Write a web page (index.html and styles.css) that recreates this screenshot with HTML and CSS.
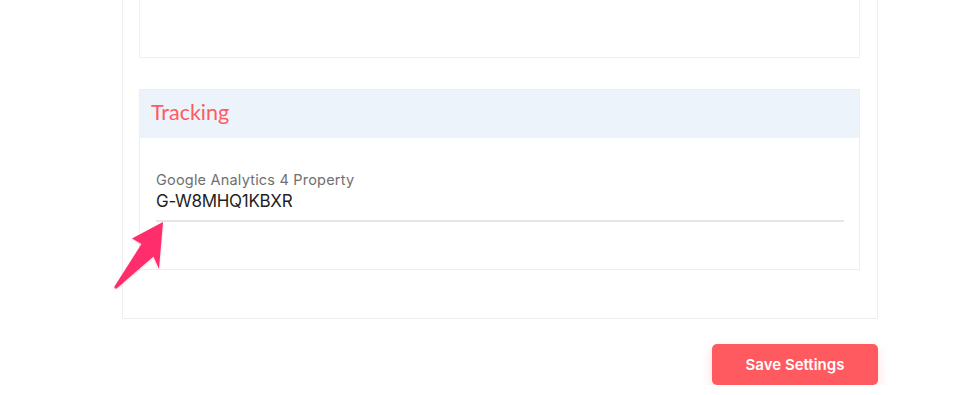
FILE: index.html
```html
<!DOCTYPE html>
<html lang="en">
<head>
<meta charset="utf-8">
<title>Settings</title>
<link rel="stylesheet" href="styles.css">
</head>
<body>
<div class="page">
  <section class="panel">
    <div class="card card-top"></div>
    <div class="card tracking">
      <div class="card-header"><h2 class="card-title">Tracking</h2></div>
      <div class="card-body">
        <label class="field">
          <span class="field-label">Google Analytics 4 Property</span>
          <span class="field-value">G-W8MHQ1KBXR</span>
        </label>
      </div>
      <svg class="arrow" width="60" height="80" viewBox="0 0 60 80" aria-hidden="true">
        <path d="M55 6 L24 22.5 L33.5 28 L6.5 70.5 Q6 73 8.5 72.5 L45.5 40.5 L51 53 Z" fill="#ff2d6b"/>
      </svg>
    </div>
  </section>
  <div class="actions">
    <button class="btn-save" type="button">Save Settings</button>
  </div>
</div>
</body>
</html>
```
FILE: styles.css
```css
* { box-sizing: border-box; }
html, body { margin: 0; padding: 0; background: #ffffff; }
body { font-family: Inter, "Noto Sans", "Liberation Sans", sans-serif; }

.page {
  width: 756px;
  margin-left: 122px;
}

.panel {
  border: 1px solid #eeeeee;
  border-top: none;
  padding: 0 17px 48px 16px;
  display: flex;
  flex-direction: column;
  gap: 31px;
}

.card {
  border: 1px solid #f0f0f0;
  background: #ffffff;
}

.card-top {
  height: 58px;
  border-top: none;
}

.tracking {
  position: relative;
  height: 181px;
  border-color: #eeeeee;
}

.card-header {
  height: 49px;
  margin: -1px -1px 0;
  background: #edf3fa;
  border: 1px solid #e8eff7;
  border-bottom: none;
  padding-left: 11px;
  padding-bottom: 4px;
  display: flex;
  align-items: center;
}

.card-title {
  margin: 0;
  font-family: Lato, "Open Sans", sans-serif;
  font-weight: 400;
  font-size: 21.5px;
  color: #ff5a5f;
}

.card-body {
  padding: 33px 15px 0 16px;
}

.field {
  display: flex;
  flex-direction: column;
  border-bottom: 2px solid #e6e6e6;
  padding-bottom: 9px;
}

.field-label {
  font-size: 14.5px;
  line-height: 18px;
  letter-spacing: 0.2px;
  color: #6f6f6f;
}

.field-value {
  font-size: 17px;
  line-height: 20px;
  letter-spacing: -0.3px;
  color: #1f1f1f;
  margin-top: 2px;
}

.arrow {
  position: absolute;
  left: -32px;
  top: 126px;
  filter: drop-shadow(0 1px 1px rgba(180, 0, 60, 0.2));
}

.actions {
  display: flex;
  justify-content: flex-end;
  padding-top: 25px;
}

.btn-save {
  width: 166px;
  height: 41px;
  border: none;
  border-radius: 5px;
  background: #ff5a5f;
  color: #ffffff;
  font-family: Inter, "Noto Sans", sans-serif;
  font-weight: 600;
  font-size: 15px;
  box-shadow: 0 5px 12px rgba(255, 90, 95, 0.22);
  cursor: pointer;
}
```
